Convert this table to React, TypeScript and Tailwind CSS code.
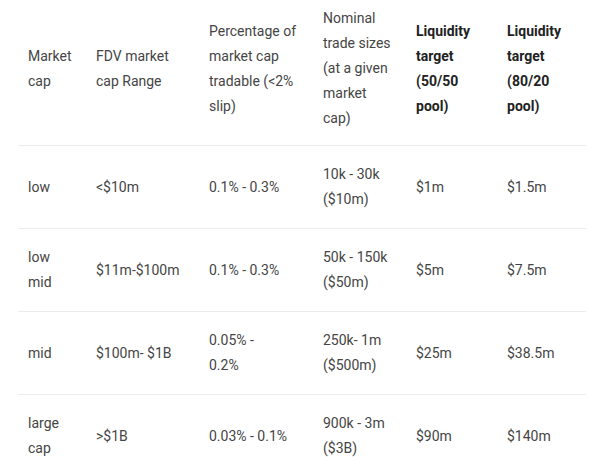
const head = [
  { lines: ["Market", "cap"], bold: false },
  { lines: ["FDV market", "cap Range"], bold: false },
  { lines: ["Percentage of", "market cap", "tradable (<2%", "slip)"], bold: false },
  { lines: ["Nominal", "trade sizes", "(at a given", "market", "cap)"], bold: false },
  { lines: ["Liquidity", "target", "(50/50", "pool)"], bold: true },
  { lines: ["Liquidity", "target", "(80/20", "pool)"], bold: true },
];

const rows: string[][][] = [
  [["low"], ["<$10m"], ["0.1% - 0.3%"], ["10k - 30k", "($10m)"], ["$1m"], ["$1.5m"]],
  [["low", "mid"], ["$11m-$100m"], ["0.1% - 0.3%"], ["50k - 150k", "($50m)"], ["$5m"], ["$7.5m"]],
  [["mid"], ["$100m- $1B"], ["0.05% -", "0.2%"], ["250k- 1m", "($500m)"], ["$25m"], ["$38.5m"]],
  [["large", "cap"], [">$1B"], ["0.03% - 0.1%"], ["900k - 3m", "($3B)"], ["$90m"], ["$140m"]],
];

const widths = ["w-[68px]", "w-[113px]", "w-[114px]", "w-[93px]", "w-[91px]", "w-[89px]"];

function Lines({ lines }: { lines: string[] }) {
  return (
    <>
      {lines.map((l, i) => (
        <div key={i} className="whitespace-nowrap">
          {l}
        </div>
      ))}
    </>
  );
}

export default function App() {
  return (
    <div
      className="w-[600px] h-[457px] overflow-hidden bg-white text-[14px] leading-[25px] text-[#454545]"
      style={{ fontFamily: "Roboto, 'Liberation Sans', sans-serif" }}
    >
      <table className="ml-[18px] w-[568px] table-fixed border-collapse">
        <colgroup>
          {widths.map((w, i) => (
            <col key={i} className={w} />
          ))}
        </colgroup>
        <thead>
          <tr className="border-b border-[#ececec]">
            {head.map((h, i) => (
              <th
                key={i}
                className={`pl-[10px] pt-[6px] pb-[14px] text-left align-middle ${
                  h.bold ? "font-bold text-[#222]" : "font-normal"
                }`}
              >
                <Lines lines={h.lines} />
              </th>
            ))}
          </tr>
        </thead>
        <tbody>
          {rows.map((r, ri) => (
            <tr key={ri} className="border-b border-[#ececec]">
              {r.map((c, ci) => (
                <td key={ci} className="h-[83px] pl-[10px] py-4 align-middle">
                  <Lines lines={c} />
                </td>
              ))}
            </tr>
          ))}
        </tbody>
      </table>
    </div>
  );
}
